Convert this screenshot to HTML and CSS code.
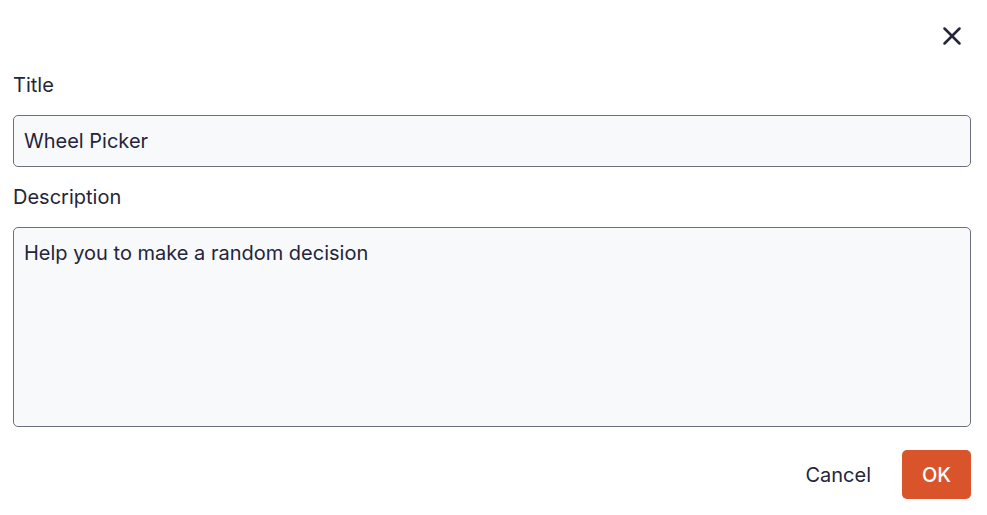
FILE: index.html
```html
<!DOCTYPE html>
<html>
<head>
<meta charset="utf-8">
<link rel="stylesheet" href="styles.css">
</head>
<body>
<div class="dialog">
  <div class="header">
    <button class="close" aria-label="Close">
      <svg width="24" height="24" viewBox="0 0 24 24" fill="none" stroke="#25253a" stroke-width="3.1" stroke-linecap="round"><path d="M3 3L21 21M21 3L3 21"/></svg>
    </button>
  </div>
  <label class="label">Title</label>
  <div class="input">Wheel Picker</div>
  <label class="label second">Description</label>
  <div class="textarea">Help you to make a random decision</div>
  <div class="actions">
    <button class="btn cancel">Cancel</button>
    <button class="btn ok">OK</button>
  </div>
</div>
</body>
</html>
```
FILE: styles.css
```css
html, body {
  margin: 0;
  background: #ffffff;
}
body {
  font-family: Inter, "Noto Sans", sans-serif;
  color: #25253a;
  font-size: 20px;
}
.dialog {
  padding: 0 16px 0 13px;
  display: flex;
  flex-direction: column;
}
.header {
  height: 72px;
  display: flex;
  justify-content: flex-end;
  align-items: center;
}
.close {
  border: 0;
  background: none;
  padding: 0;
  width: 24px;
  height: 24px;
  margin-right: 7px;
  display: flex;
}
.close svg {
  width: 20px;
  height: 20px;
  margin: 2px;
}
.label {
  display: block;
  line-height: 27px;
  margin-bottom: 16px;
}
.label.second {
  margin-top: 17px;
}
.input, .textarea {
  border: 1px solid #6b7081;
  border-radius: 5px;
  background: #f8f9fb;
  padding: 12px 10px 11px;
  line-height: 27px;
}
.textarea {
  box-sizing: border-box;
  height: 200px;
}
.actions {
  display: flex;
  justify-content: flex-end;
  align-items: center;
  margin-top: 23px;
  gap: 13px;
}
.btn {
  font-family: Inter, "Noto Sans", sans-serif;
  font-size: 20px;
  border: 0;
  border-radius: 5px;
  height: 49px;
  padding: 0 18px;
  cursor: pointer;
}
.cancel {
  background: none;
  color: #25253a;
}
.ok {
  background: #d9542b;
  color: #ffffff;
  font-weight: 500;
  width: 69px;
  padding: 0;
}
```
